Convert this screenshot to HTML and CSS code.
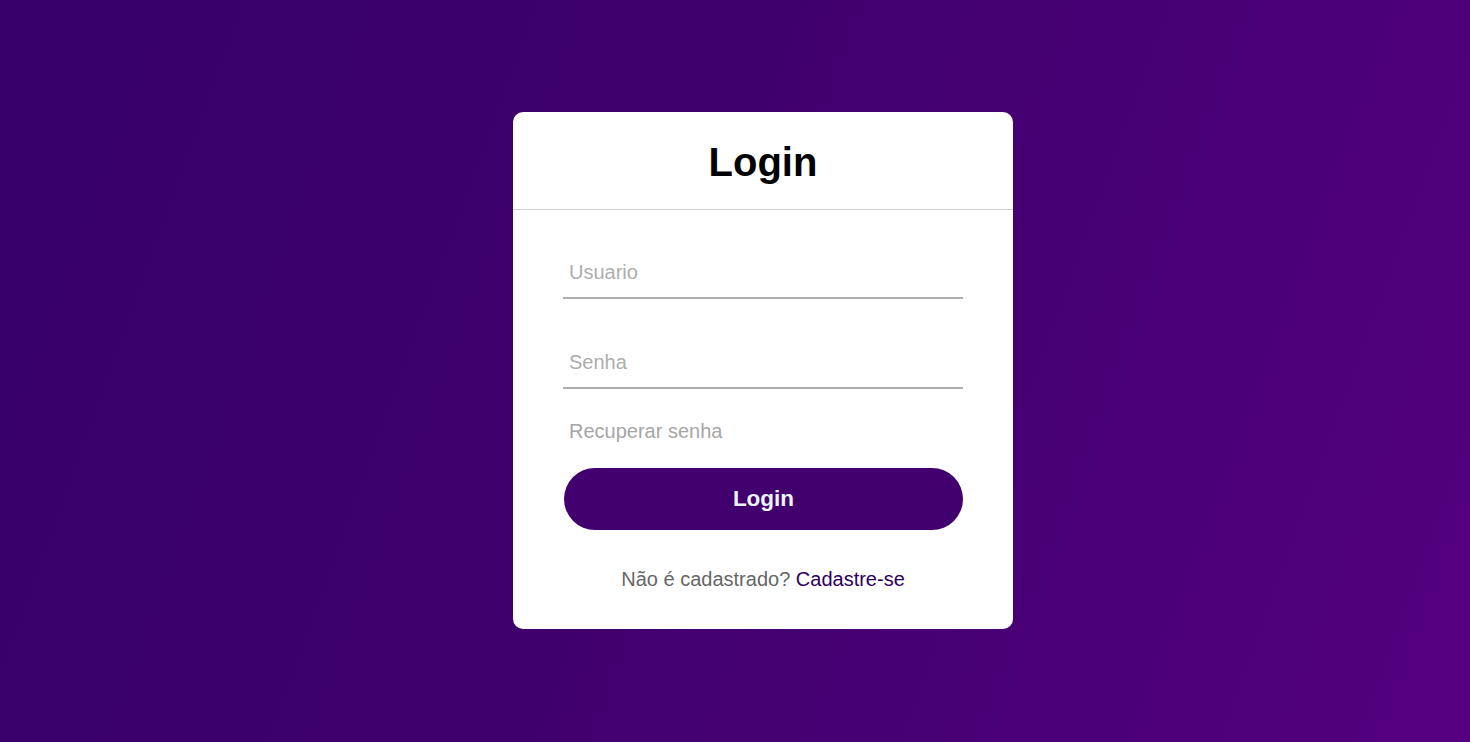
FILE: index.html
```html
<!DOCTYPE html>
<html lang="pt-BR">
<head>
<meta charset="utf-8">
<title>Login</title>
<link rel="stylesheet" href="styles.css">
</head>
<body>
<main class="page">
  <div class="card">
    <h1 class="card-title">Login</h1>
    <form class="form">
      <div class="field">
        <input class="field-input" type="text" placeholder="Usuario">
      </div>
      <div class="field field-second">
        <input class="field-input" type="password" placeholder="Senha">
      </div>
      <div class="recover">Recuperar senha</div>
      <button class="submit" type="button">Login</button>
      <div class="signup">Não é cadastrado? <a class="signup-link" href="#">Cadastre-se</a></div>
    </form>
  </div>
</main>
</body>
</html>
```

FILE: styles.css
```css
* { box-sizing: border-box; }
html, body { margin: 0; padding: 0; height: 100%; }
body {
  font-family: "Liberation Sans", Arial, sans-serif;
  background: linear-gradient(110deg, #37006a 0%, #3f006d 45%, #54007f 100%);
  overflow: hidden;
}
.page {
  height: 100%;
  display: flex;
  align-items: center;
  justify-content: center;
  padding-left: 56px;
  padding-bottom: 1px;
}
.card {
  width: 500px;
  background: #fff;
  border-radius: 10px;
}
.card-title {
  margin: 0;
  padding: 27px 0 24px;
  text-align: center;
  font-size: 40px;
  font-weight: 700;
  line-height: 46px;
  color: #000;
  border-bottom: 1px solid #d0d0d0;
}
.form {
  padding: 37px 50px 0;
}
.field {
  border-bottom: 2px solid #adadad;
}
.field-second { margin-top: 38px; }
.field-input {
  display: block;
  width: 100%;
  height: 50px;
  padding: 0 6px;
  border: none;
  outline: none;
  background: none;
  font-family: "Liberation Sans", Arial, sans-serif;
  font-size: 20px;
  color: #333;
}
.field-input::placeholder { color: #adadad; opacity: 1; }
.recover {
  margin: 31px 0 25px 6px;
  font-size: 20px;
  line-height: 23px;
  color: #a6a6a6;
}
.submit {
  display: block;
  width: 399px;
  margin-left: 1px;
  height: 62px;
  border: none;
  border-radius: 31px;
  background: #42006f;
  color: #e9f4fb;
  font-family: "Liberation Sans", Arial, sans-serif;
  font-size: 22.5px;
  font-weight: 700;
  cursor: pointer;
}
.signup {
  padding: 38px 0 38px;
  text-align: center;
  font-size: 20px;
  line-height: 23px;
  color: #666;
}
.signup-link {
  color: #2e005e;
  text-decoration: none;
}
```
